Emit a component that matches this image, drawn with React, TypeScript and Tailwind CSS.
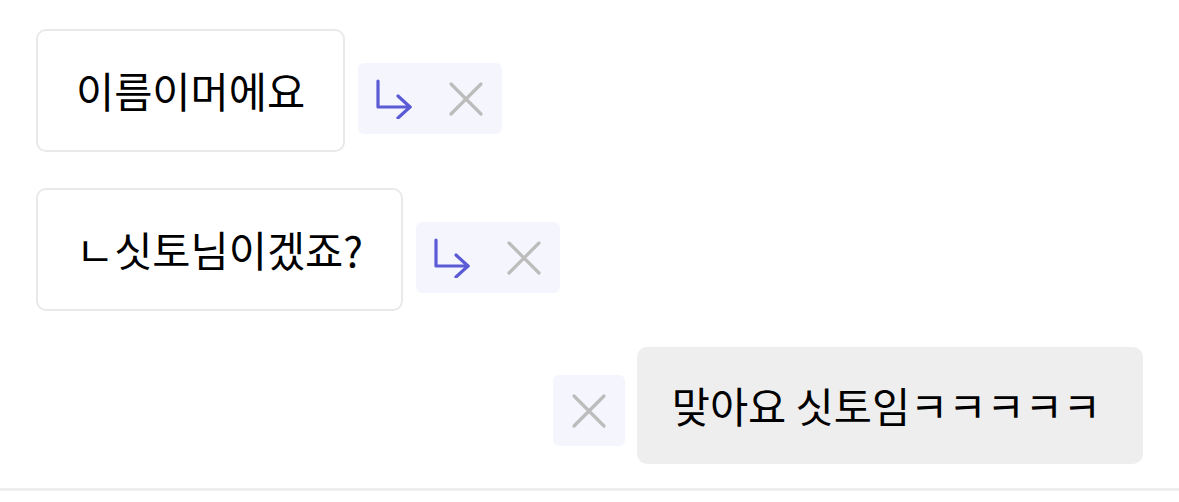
import React from "react";

const font = { fontFamily: '"Noto Sans CJK KR", "Noto Sans", sans-serif' };

function ReplyIcon() {
  return (
    <svg width="36" height="40" viewBox="0 0 36 40" fill="none" stroke="#5b5bd6" strokeWidth="3.2" strokeLinecap="round" strokeLinejoin="round">
      <path d="M2 2v26h32" />
      <path d="M22 17l12 11-12 11" />
    </svg>
  );
}

function CloseIcon() {
  return (
    <svg width="36" height="36" viewBox="0 0 36 36" fill="none" stroke="#bcbcbc" strokeWidth="3.2" strokeLinecap="round">
      <path d="M3 3l30 30M33 3L3 33" />
    </svg>
  );
}

function Actions({ reply = true }: { reply?: boolean }) {
  return (
    <div className="flex h-[71px] items-center gap-[36px] rounded-md bg-[#f5f5fe] px-[18px] mb-[18px]">
      {reply && <ReplyIcon />}
      <CloseIcon />
    </div>
  );
}

function Bubble({ text }: { text: string }) {
  return (
    <div className="rounded-[10px] border-2 border-[#e9e9e9] bg-white px-[38px] py-[31px] text-[41.5px] leading-[57px] text-black">
      {text}
    </div>
  );
}

export default function App() {
  return (
    <div className="flex h-[502px] w-[1179px] flex-col bg-white" style={font}>
      <div className="flex flex-1 flex-col gap-[36px] pl-[36px] pr-[36px] pt-[29px]">
        <div className="flex items-end gap-[13px]">
          <Bubble text="이름이머에요" />
          <Actions />
        </div>
        <div className="flex items-end gap-[13px]">
          <Bubble text="ㄴ싯토님이겠죠?" />
          <Actions />
        </div>
        <div className="flex items-end justify-end gap-[12px]">
          <Actions reply={false} />
          <div className="rounded-[10px] bg-[#eeeeee] pl-[35px] pr-[42px] py-[30px] text-[41.5px] leading-[57px] text-black">
            맞아요 싯토임ㅋㅋㅋㅋㅋ
          </div>
        </div>
      </div>
      <div className="mb-[11px] h-[3px] w-full bg-[#eeeeee]" />
    </div>
  );
}
